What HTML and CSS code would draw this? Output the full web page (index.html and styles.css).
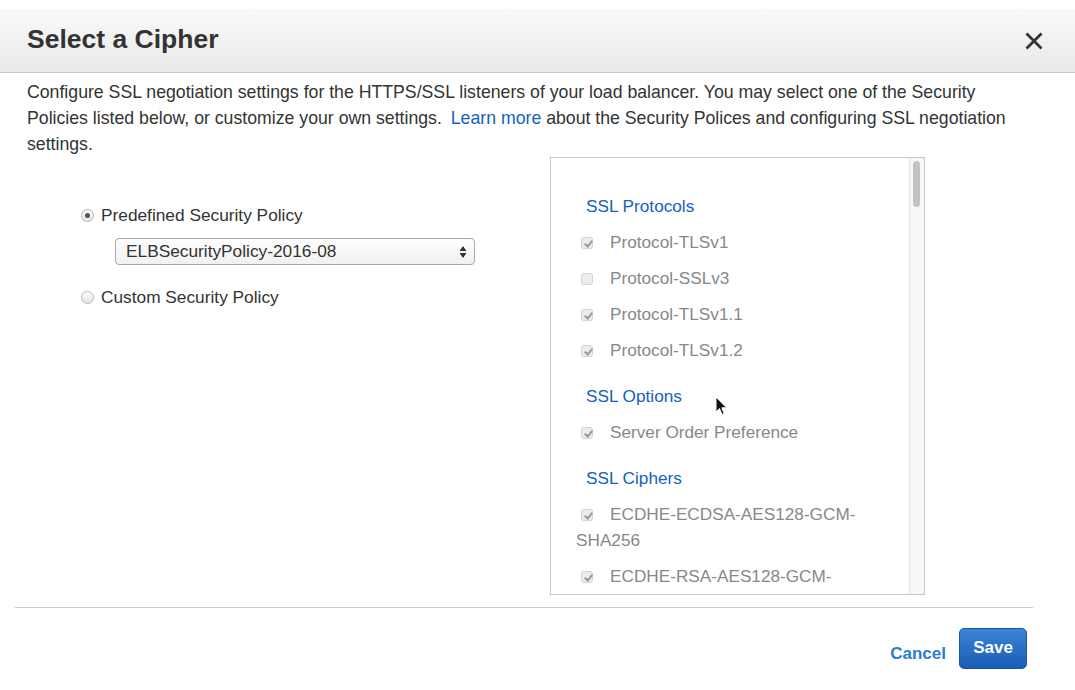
FILE: index.html
```html
<!DOCTYPE html>
<html>
<head>
<meta charset="utf-8">
<link rel="stylesheet" href="styles.css">
</head>
<body>
<div class="dialog">
  <header class="head">
    <h1 class="title">Select a Cipher</h1>
    <button class="close" aria-label="Close">
      <svg width="18" height="18" viewBox="0 0 18 18"><path d="M1.5 1.5L16.5 16.5M16.5 1.5L1.5 16.5" stroke="#333" stroke-width="2.8"/></svg>
    </button>
  </header>
  <p class="intro">Configure SSL negotiation settings for the HTTPS/SSL listeners of your load balancer. You may select one of the Security Policies listed below, or customize your own settings. <a class="link" href="#">Learn more</a> about the Security Polices and configuring SSL negotiation settings.</p>
  <div class="main">
    <div class="left">
      <label class="radio-row"><span class="radio checked"></span>Predefined Security Policy</label>
      <div class="select">
        <span>ELBSecurityPolicy-2016-08</span>
        <svg class="arrows" width="8" height="14" viewBox="0 0 8 14"><path d="M4 1L7.5 6H0.5Z M4 13L7.5 8H0.5Z" fill="#333"/></svg>
      </div>
      <label class="radio-row second"><span class="radio"></span>Custom Security Policy</label>
    </div>
    <div class="panel">
      <div class="panel-content">
        <div class="group-title first">SSL Protocols</div>
        <div class="opt"><span class="cb on"></span>Protocol-TLSv1</div>
        <div class="opt"><span class="cb"></span>Protocol-SSLv3</div>
        <div class="opt"><span class="cb on"></span>Protocol-TLSv1.1</div>
        <div class="opt"><span class="cb on"></span>Protocol-TLSv1.2</div>
        <div class="group-title">SSL Options</div>
        <div class="opt"><span class="cb on"></span>Server Order Preference</div>
        <div class="group-title">SSL Ciphers</div>
        <div class="opt"><span class="cb on"></span>ECDHE-ECDSA-AES128-GCM-SHA256</div>
        <div class="opt"><span class="cb on"></span>ECDHE-RSA-AES128-GCM-SHA256</div>
      </div>
      <div class="scrollbar"><div class="thumb"></div></div>
      <svg class="cursor" width="13" height="20" viewBox="0 0 13 20"><path d="M1 1L1 16L4.5 12.5L7 18.5L9.2 17.6L6.8 11.8L11.5 11.8Z" fill="#111" stroke="#fff" stroke-width="1"/></svg>
    </div>
  </div>
  <div class="footer">
    <a class="cancel" href="#">Cancel</a>
    <button class="save">Save</button>
  </div>
</div>
</body>
</html>
```

FILE: styles.css
```css
* { box-sizing: border-box; }
html, body { margin: 0; padding: 0; background: #fff; }
body {
  font-family: "Liberation Sans", Arial, sans-serif;
  color: #333;
  width: 1075px;
  height: 690px;
  overflow: hidden;
}
.dialog { padding-top: 9px; }
.head {
  height: 64px;
  display: flex;
  align-items: center;
  justify-content: space-between;
  padding: 0 32px 0 27px;
  background: linear-gradient(#f9f9f9, #e9e9e9);
  border-bottom: 1px solid #c9c9c9;
}
.title {
  margin: 0;
  font-size: 26.5px;
  font-weight: bold;
  color: #333;
  padding-bottom: 3px;
}
.close {
  border: 0;
  background: none;
  padding: 0;
  width: 18px;
  height: 18px;
  display: block;
}
.close svg { display: block; }
.intro {
  margin: 0;
  padding: 6px 60px 0 27px;
  font-size: 17.7px;
  line-height: 26px;
  color: #333;
}
.link { color: #1461c1; text-decoration: none; margin-left: 4px; }
.main { display: flex; }
.left {
  width: 550px;
  padding: 47px 0 0 81px;
}
.radio-row {
  display: flex;
  align-items: center;
  font-size: 17.3px;
  line-height: 22px;
  color: #333;
}
.radio-row.second { margin-top: 21px; }
.radio {
  width: 13px;
  height: 13px;
  border-radius: 50%;
  border: 1px solid #b5b5b5;
  background: linear-gradient(#fdfdfd, #e4e4e4);
  margin-right: 7px;
  position: relative;
  flex: none;
}
.radio.checked::after {
  content: "";
  position: absolute;
  left: 3px;
  top: 3px;
  width: 5px;
  height: 5px;
  border-radius: 50%;
  background: #555;
}
.select {
  margin: 12px 0 0 34px;
  width: 360px;
  height: 27px;
  border: 1px solid #a8a8a8;
  border-radius: 4px;
  background: linear-gradient(#fdfdfd, #f1f1f1);
  display: flex;
  align-items: center;
  justify-content: space-between;
  padding: 0 7px 0 10px;
  font-size: 17.3px;
  color: #333;
}
.arrows { display: block; }
.panel {
  position: relative;
  width: 375px;
  height: 438px;
  border: 1px solid #c8c8c8;
  display: flex;
  overflow: hidden;
}
.panel-content {
  flex: 1;
  padding: 35px 28px 0 25px;
  font-size: 17.2px;
}
.group-title {
  color: #1461c1;
  line-height: 26px;
  margin: 20px 0 10px 10px;
}
.group-title.first { margin-top: 0; }
.opt {
  line-height: 26px;
  margin-bottom: 10px;
  color: #888;
}
.cb {
  display: inline-block;
  width: 12px;
  height: 12px;
  margin: 0 17px 0 5px;
  border: 1px solid #d3d3d3;
  border-radius: 3px;
  background: #ececec;
  vertical-align: -1px;
  position: relative;
}
.cb.on::after {
  content: "";
  position: absolute;
  left: 3.5px;
  top: 0.5px;
  width: 3px;
  height: 6px;
  border: solid #999;
  border-width: 0 2px 2px 0;
  transform: rotate(40deg);
}
.scrollbar {
  width: 15px;
  flex: none;
  background: #f7f7f7;
  border-left: 1px solid #e6e6e6;
  padding: 3px 3px 0 3px;
}
.thumb {
  width: 7px;
  height: 46px;
  border-radius: 4px;
  background: #c2c2c2;
}
.cursor {
  position: absolute;
  left: 164px;
  top: 238px;
}
.footer {
  margin: 12px 42px 0 15px;
  border-top: 1px solid #cfcfcf;
  display: flex;
  justify-content: flex-end;
  align-items: center;
  padding-top: 20px;
}
.cancel {
  color: #2e7bcf;
  font-weight: bold;
  font-size: 17px;
  text-decoration: none;
  margin-right: 13px;
  padding-top: 10px;
}
.save {
  width: 68px;
  height: 41px;
  border: 1px solid #1a56a0;
  border-radius: 5px;
  background: linear-gradient(#3a85d6, #1a5db5);
  color: #fff;
  font-family: "Liberation Sans", Arial, sans-serif;
  font-weight: bold;
  font-size: 17px;
  padding: 0 0 1px 0;
  margin-right: 6px;
}
```
